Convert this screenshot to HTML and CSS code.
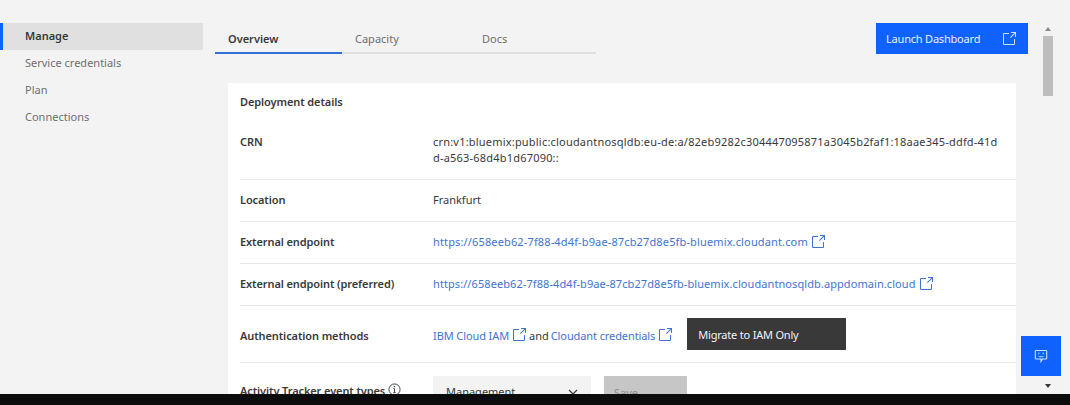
FILE: index.html
```html
<!DOCTYPE html>
<html lang="en">
<head>
    <meta charset="UTF-8">
    <meta name="viewport" content="width=device-width, initial-scale=1.0">
    <title>Cloudant - Manage</title>
    <link rel="stylesheet" href="styles.css">
</head>
<body>
    <svg class="icon-defs" width="0" height="0" aria-hidden="true">
        <symbol id="launch" viewBox="0 0 32 32">
            <path d="M26 28H6a2 2 0 0 1-2-2V6a2 2 0 0 1 2-2h10v2H6v20h20V16h2v10a2 2 0 0 1-2 2zM20 2v2h6.586L18 12.586 19.414 14 28 5.414V12h2V2H20z"/>
        </symbol>
    </svg>
    <div class="app">
        <!-- Menu lateral -->
        <nav class="sidebar">
            <a class="side-item active">Manage</a>
            <a class="side-item">Service credentials</a>
            <a class="side-item">Plan</a>
            <a class="side-item">Connections</a>
        </nav>

        <main class="content">
            <div class="top-bar">
                <div class="tabs">
                    <a class="tab selected">Overview</a>
                    <a class="tab">Capacity</a>
                    <a class="tab">Docs</a>
                </div>
                <button class="launch-btn">
                    Launch Dashboard
                    <svg class="launch-btn-icon"><use href="#launch"/></svg>
                </button>
            </div>

            <!-- Detalles del despliegue -->
            <section class="card">
                <h2 class="card-title">Deployment details</h2>
                <div class="row row-crn">
                    <div class="row-label">CRN</div>
                    <div class="row-value crn">crn:v1:bluemix:public:cloudantnosqldb:eu-de:a/82eb9282c304447095871a3045b2faf1:18aae345-ddfd-41dd-a563-68d4b1d67090::</div>
                </div>
                <div class="row">
                    <div class="row-label">Location</div>
                    <div class="row-value">Frankfurt</div>
                </div>
                <div class="row">
                    <div class="row-label">External endpoint</div>
                    <div class="row-value">
                        <a class="link">https://658eeb62-7f88-4d4f-b9ae-87cb27d8e5fb-bluemix.cloudant.com</a>
                        <svg class="link-icon"><use href="#launch"/></svg>
                    </div>
                </div>
                <div class="row">
                    <div class="row-label">External endpoint (preferred)</div>
                    <div class="row-value">
                        <a class="link link-long">https://658eeb62-7f88-4d4f-b9ae-87cb27d8e5fb-bluemix.cloudantnosqldb.appdomain.cloud</a>
                        <svg class="link-icon"><use href="#launch"/></svg>
                    </div>
                </div>
                <div class="row row-auth">
                    <div class="row-label">Authentication methods</div>
                    <div class="row-value">
                        <a class="link link-short">IBM Cloud IAM</a>
                        <svg class="link-icon"><use href="#launch"/></svg>
                        <span class="and">and</span>
                        <a class="link link-short">Cloudant credentials</a>
                        <svg class="link-icon"><use href="#launch"/></svg>
                        <button class="migrate-btn">Migrate to IAM Only</button>
                    </div>
                </div>
                <div class="row row-tracker">
                    <div class="row-label tracker-label">
                        Activity Tracker event types
                        <svg class="info-icon" viewBox="0 0 14 14">
                            <circle cx="7" cy="7" r="6" fill="none" stroke="#393939"/>
                            <path d="M7 6v4.2M5.6 10.4h2.8M5.8 6h1.2" fill="none" stroke="#393939"/>
                            <circle cx="7" cy="3.9" r=".8" fill="#393939"/>
                        </svg>
                    </div>
                    <div class="row-value">
                        <div class="select">
                            <span class="select-text">Management</span>
                            <svg class="chevron" viewBox="0 0 10 6"><path d="M1 1l4 4 4-4" fill="none" stroke="#393939" stroke-width="1.2"/></svg>
                        </div>
                        <button class="save-btn" disabled>Save</button>
                    </div>
                </div>
            </section>
        </main>

        <div class="scrollbar">
            <span class="arrow arrow-up"></span>
            <div class="thumb"></div>
            <span class="arrow arrow-down"></span>
        </div>

        <button class="feedback-btn" aria-label="Feedback">
            <svg viewBox="0 0 14 14" width="14" height="14">
                <path d="M2 1.5h10a.7.7 0 0 1 .7.7v7.1a.7.7 0 0 1-.7.7H8.500L7 12.500V10H2a.7.7 0 0 1-.7-.7V2.200a.7.7 0 0 1 .7-.7z" fill="none" stroke="#cfe0ff" stroke-width="1.1"/>
                <path d="M4.600 7.200c.7.8 4.100.8 4.800 0" fill="none" stroke="#cfe0ff"/>
                <path d="M4.800 3.600v1.500M9.200 3.600v1.500" stroke="#cfe0ff"/>
            </svg>
        </button>
    </div>
    <div class="bottom-bar"></div>
</body>
</html>
```

FILE: styles.css
```css
* {
    box-sizing: border-box;
}

body {
    font-family: "Noto Sans", Arial, sans-serif;
    font-size: 11px;
    color: #393939;
    background-color: #f3f3f3;
    margin: 0;
    height: 405px;
    display: flex;
    flex-direction: column;
    overflow: hidden;
}

.icon-defs {
    position: absolute;
}

.app {
    position: relative;
    flex: 1;
    min-height: 0;
    display: flex;
    overflow: hidden;
}

.bottom-bar {
    height: 11px;
    background-color: #0c0c0c;
}

/* Menu lateral */
.sidebar {
    width: 203px;
    flex: none;
    padding-top: 23px;
}

.side-item {
    display: flex;
    align-items: center;
    height: 27px;
    padding: 0 0 2px 25px;
    color: #6f6f6f;
}

.side-item.active {
    background-color: #e0e0e0;
    border-left: 3px solid #0f62fe;
    padding-left: 22px;
    color: #393939;
    font-weight: 600;
}

.content {
    width: 825px;
    flex: none;
    padding: 23px 0 0 12px;
}

.top-bar {
    display: flex;
    justify-content: space-between;
    align-items: flex-start;
    height: 60px;
}

/* Pestañas */
.tabs {
    display: flex;
    margin-top: 1px;
    width: 381px;
    border-bottom: 2px solid #e0e0e0;
}

.tab {
    width: 127px;
    height: 30px;
    margin-bottom: -2px;
    padding: 7px 0 0 13px;
    color: #6f6f6f;
}

.tab.selected {
    color: #393939;
    font-weight: 600;
    border-bottom: 2px solid #2f6fd6;
}

.launch-btn {
    display: flex;
    justify-content: space-between;
    align-items: center;
    width: 152px;
    height: 31px;
    padding: 0 11px 0 10px;
    border: none;
    background-color: #0f62fe;
    color: #e8efff;
    font-family: inherit;
    font-size: 11px;
    letter-spacing: -0.2px;
}

.launch-btn-icon {
    width: 16px;
    height: 16px;
    fill: #cfe0ff;
}

/* Tarjeta de detalles */
.card {
    width: 788px;
    margin-left: 13px;
    padding: 0 0 0 12px;
    background-color: white;
    height: 330px;
}

.card-title {
    margin: 0;
    padding-top: 11px;
    height: 38px;
    font-size: 11px;
    font-weight: 600;
    letter-spacing: -0.1px;
}

.row {
    display: flex;
    align-items: center;
    height: 42px;
    padding-bottom: 2px;
    border-bottom: 1px solid #e8e8e8;
}

.row-label {
    width: 193px;
    flex: none;
    font-weight: 600;
    letter-spacing: -0.1px;
}

.row-value {
    display: flex;
    align-items: center;
    min-width: 0;
}

.row-crn {
    height: 59px;
    align-items: flex-start;
    padding: 13px 0 0;
}

.crn {
    display: block;
    width: 566px;
    line-height: 16px;
    letter-spacing: 0.2px;
    word-break: break-all;
}

.row-auth {
    height: 57px;
    padding: 2px 0 0;
}

.row-tracker {
    border-bottom: none;
    align-items: flex-start;
    padding: 13px 0 0;
    height: 40px;
}

.link {
    color: #3f73d0;
    letter-spacing: 0.14px;
}

.link-long {
    letter-spacing: 0.08px;
}

.link-short {
    letter-spacing: -0.1px;
}

.link-icon {
    width: 16px;
    height: 16px;
    margin-left: 2px;
    fill: #3f73d0;
}

.and {
    margin: 0 2px 0 2px;
}

.migrate-btn {
    width: 159px;
    height: 32px;
    margin: 0 0 2px 14px;
    padding: 0 0 0 11px;
    border: none;
    background-color: #393939;
    color: #f4f4f4;
    font-family: inherit;
    font-size: 11px;
    letter-spacing: -0.2px;
    text-align: left;
}

.tracker-label {
    padding-top: 7px;
}

.info-icon {
    width: 13px;
    height: 13px;
    vertical-align: -1px;
}

.select {
    display: flex;
    justify-content: space-between;
    align-items: center;
    width: 158px;
    height: 32px;
    padding: 0 13px 0 13px;
    background-color: #f3f3f3;
}

.select-text {
    padding-bottom: 2px;
}

.chevron {
    width: 10px;
    height: 6px;
}

.save-btn {
    width: 83px;
    height: 32px;
    margin-left: 13px;
    padding: 0 0 0 10px;
    border: none;
    background-color: #c6c6c6;
    color: #8d8d8d;
    font-family: inherit;
    font-size: 11px;
    text-align: left;
}

/* Barra de desplazamiento */
.scrollbar {
    width: 10px;
    margin-left: 15px;
    padding-top: 27px;
    display: flex;
    flex-direction: column;
    align-items: center;
    height: 100%;
}

.thumb {
    width: 10px;
    height: 60px;
    margin-top: 5px;
    background-color: #bdbdbd;
}

.arrow {
    width: 0;
    height: 0;
    border-left: 3px solid transparent;
    border-right: 3px solid transparent;
}

.arrow-up {
    border-bottom: 4px solid #8a8a8a;
}

.arrow-down {
    margin-top: auto;
    margin-bottom: 6px;
    border-top: 4px solid #333333;
}

.feedback-btn {
    position: absolute;
    top: 336px;
    left: 1021px;
    width: 40px;
    height: 40px;
    display: flex;
    align-items: center;
    justify-content: center;
    padding: 0;
    border: none;
    background-color: #0f62fe;
}
```
